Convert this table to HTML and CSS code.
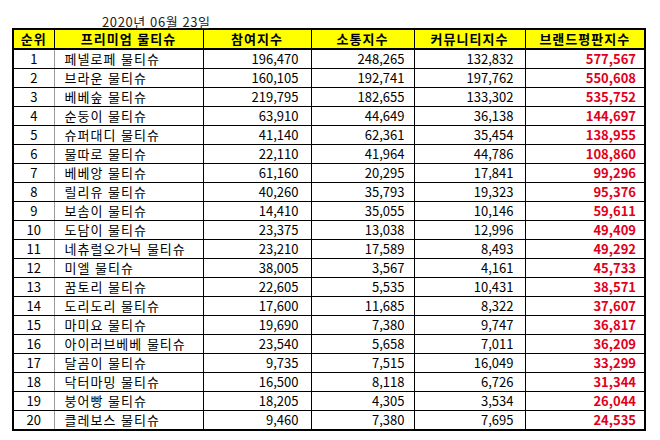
FILE: index.html
```html
<!DOCTYPE html>
<html lang="ko">
<head>
<meta charset="utf-8">
<link rel="stylesheet" href="styles.css">
</head>
<body>
<div class="date">2020년 06월 23일</div>
<table class="rank">
<colgroup>
<col class="c-rank"><col class="c-name"><col class="c-a"><col class="c-b"><col class="c-c"><col class="c-d">
</colgroup>
<thead>
<tr><th>순위</th><th>프리미엄 물티슈</th><th>참여지수</th><th>소통지수</th><th>커뮤니티지수</th><th>브랜드평판지수</th></tr>
</thead>
<tbody>
<tr><td>1</td><td>페넬로페 물티슈</td><td>196,470</td><td>248,265</td><td>132,832</td><td>577,567</td></tr>
<tr><td>2</td><td>브라운 물티슈</td><td>160,105</td><td>192,741</td><td>197,762</td><td>550,608</td></tr>
<tr><td>3</td><td>베베숲 물티슈</td><td>219,795</td><td>182,655</td><td>133,302</td><td>535,752</td></tr>
<tr><td>4</td><td>순둥이 물티슈</td><td>63,910</td><td>44,649</td><td>36,138</td><td>144,697</td></tr>
<tr><td>5</td><td>슈퍼대디 물티슈</td><td>41,140</td><td>62,361</td><td>35,454</td><td>138,955</td></tr>
<tr><td>6</td><td>물따로 물티슈</td><td>22,110</td><td>41,964</td><td>44,786</td><td>108,860</td></tr>
<tr><td>7</td><td>베베앙 물티슈</td><td>61,160</td><td>20,295</td><td>17,841</td><td>99,296</td></tr>
<tr><td>8</td><td>릴리유 물티슈</td><td>40,260</td><td>35,793</td><td>19,323</td><td>95,376</td></tr>
<tr><td>9</td><td>보솜이 물티슈</td><td>14,410</td><td>35,055</td><td>10,146</td><td>59,611</td></tr>
<tr><td>10</td><td>도담이 물티슈</td><td>23,375</td><td>13,038</td><td>12,996</td><td>49,409</td></tr>
<tr><td>11</td><td>네츄럴오가닉 물티슈</td><td>23,210</td><td>17,589</td><td>8,493</td><td>49,292</td></tr>
<tr><td>12</td><td>미엘 물티슈</td><td>38,005</td><td>3,567</td><td>4,161</td><td>45,733</td></tr>
<tr><td>13</td><td>꿈토리 물티슈</td><td>22,605</td><td>5,535</td><td>10,431</td><td>38,571</td></tr>
<tr><td>14</td><td>도리도리 물티슈</td><td>17,600</td><td>11,685</td><td>8,322</td><td>37,607</td></tr>
<tr><td>15</td><td>마미요 물티슈</td><td>19,690</td><td>7,380</td><td>9,747</td><td>36,817</td></tr>
<tr><td>16</td><td>아이러브베베 물티슈</td><td>23,540</td><td>5,658</td><td>7,011</td><td>36,209</td></tr>
<tr><td>17</td><td>달곰이 물티슈</td><td>9,735</td><td>7,515</td><td>16,049</td><td>33,299</td></tr>
<tr><td>18</td><td>닥터마밍 물티슈</td><td>16,500</td><td>8,118</td><td>6,726</td><td>31,344</td></tr>
<tr><td>19</td><td>붕어빵 물티슈</td><td>18,205</td><td>4,305</td><td>3,534</td><td>26,044</td></tr>
<tr><td>20</td><td>클레보스 물티슈</td><td>9,460</td><td>7,380</td><td>7,695</td><td>24,535</td></tr>
</tbody>
</table>
</body>
</html>
```
FILE: styles.css
```css
html, body {
  margin: 0;
  padding: 0;
  background: #fff;
}
body {
  font-family: "Noto Sans CJK KR", "Noto Sans", sans-serif;
  font-size: 13px;
  color: #000;
}
.date {
  height: 28px;
  box-sizing: border-box;
  padding: 13px 0 0 102px;
  line-height: 17px;
  letter-spacing: 0.6px;
  color: #222;
}
.rank {
  margin-left: 12px;
  border-collapse: collapse;
  table-layout: fixed;
  width: 632px;
  border: 2px solid #000;
}
.c-rank { width: 41px; }
.c-name { width: 149px; }
.c-a { width: 108px; }
.c-b { width: 103px; }
.c-c { width: 111px; }
.c-d { width: 120px; }
.rank tr { height: 19px; }
.rank th, .rank td {
  padding: 0;
  height: 18px;
  line-height: 18px;
  border: 1px solid #000;
  white-space: nowrap;
  overflow: hidden;
}
.rank th {
  background: #ffff00;
  font-weight: bold;
  text-align: center;
  letter-spacing: 1px;
  border-bottom: 2px solid #000;
}
.rank td:nth-child(1) {
  text-align: center;
  border-right-color: #9a9a9a;
}
.rank td:nth-child(2) {
  text-align: left;
  padding-left: 10px;
  letter-spacing: 1px;
}
.rank td:nth-child(3) { text-align: right; padding-right: 12px; }
.rank td:nth-child(4) { text-align: right; padding-right: 9px; }
.rank td:nth-child(5) { text-align: right; padding-right: 11px; }
.rank td:nth-child(6) {
  text-align: right;
  padding-right: 8px;
  color: #e1001a;
  font-weight: bold;
}
```
